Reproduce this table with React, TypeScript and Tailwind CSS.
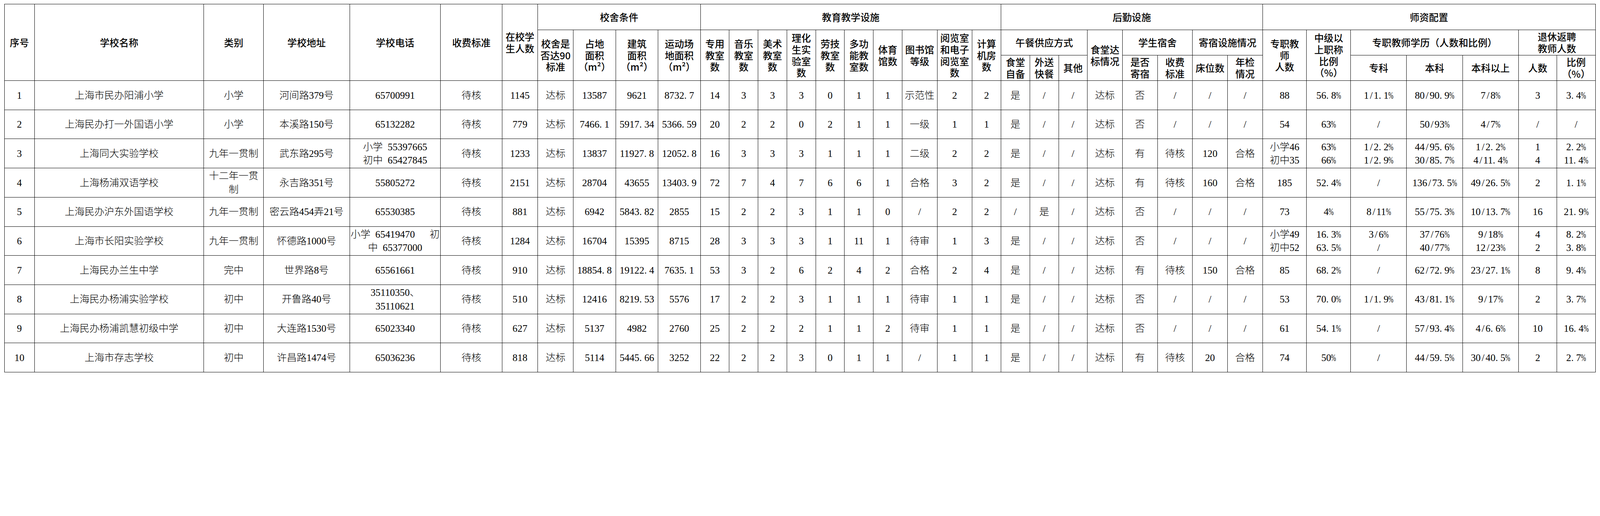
import React from "react";

// All sizes are expressed in vw so that 1 reference pixel = 100vw / 5664.
const colW = [
  "w-[1.8715vw]", "w-[10.5932vw]", "w-[3.7253vw]", "w-[5.3849vw]", "w-[5.6850vw]", "w-[3.8489vw]", "w-[2.2246vw]",
  "w-[2.2246vw]", "w-[2.6483vw]", "w-[2.6483vw]", "w-[2.6483vw]",
  "w-[1.8008vw]", "w-[1.8008vw]", "w-[1.8008vw]", "w-[1.8008vw]", "w-[1.8008vw]", "w-[1.8008vw]", "w-[1.8008vw]", "w-[2.1893vw]", "w-[2.1893vw]", "w-[1.8008vw]",
  "w-[1.8008vw]", "w-[1.8008vw]", "w-[1.8008vw]", "w-[2.1893vw]", "w-[2.1893vw]", "w-[2.1893vw]", "w-[2.1893vw]", "w-[2.1893vw]",
  "w-[2.7542vw]", "w-[2.7542vw]", "w-[3.4958vw]", "w-[3.4958vw]", "w-[3.4958vw]", "w-[2.4011vw]", "w-[2.4011vw]",
];

const rows: string[][] = [
  ["1", "上海市民办阳浦小学", "小学", "河间路379号", "65700991", "待核", "1145", "达标", "13587", "9621", "8732.7", "14", "3", "3", "3", "0", "1", "1", "示范性", "2", "2", "是", "/", "/", "达标", "否", "/", "/", "/", "88", "56.8%", "1/1.1%", "80/90.9%", "7/8%", "3", "3.4%"],
  ["2", "上海民办打一外国语小学", "小学", "本溪路150号", "65132282", "待核", "779", "达标", "7466.1", "5917.34", "5366.59", "20", "2", "2", "0", "2", "1", "1", "一级", "1", "1", "是", "/", "/", "达标", "否", "/", "/", "/", "54", "63%", "/", "50/93%", "4/7%", "/", "/"],
  ["3", "上海同大实验学校", "九年一贯制", "武东路295号", "小学 55397665\n初中 65427845", "待核", "1233", "达标", "13837", "11927.8", "12052.8", "16", "3", "3", "3", "1", "1", "1", "二级", "2", "2", "是", "/", "/", "达标", "有", "待核", "120", "合格", "小学46\n初中35", "63%\n66%", "1/2.2%\n1/2.9%", "44/95.6%\n30/85.7%", "1/2.2%\n4/11.4%", "1\n4", "2.2%\n11.4%"],
  ["4", "上海杨浦双语学校", "十二年一贯\n制", "永吉路351号", "55805272", "待核", "2151", "达标", "28704", "43655", "13403.9", "72", "7", "4", "7", "6", "6", "1", "合格", "3", "2", "是", "/", "/", "达标", "有", "待核", "160", "合格", "185", "52.4%", "/", "136/73.5%", "49/26.5%", "2", "1.1%"],
  ["5", "上海民办沪东外国语学校", "九年一贯制", "密云路454弄21号", "65530385", "待核", "881", "达标", "6942", "5843.82", "2855", "15", "2", "2", "3", "1", "1", "0", "/", "2", "2", "/", "是", "/", "达标", "否", "/", "/", "/", "73", "4%", "8/11%", "55/75.3%", "10/13.7%", "16", "21.9%"],
  ["6", "上海市长阳实验学校", "九年一贯制", "怀德路1000号", "小学 65419470   初\n中 65377000", "待核", "1284", "达标", "16704", "15395", "8715", "28", "3", "3", "3", "1", "11", "1", "待审", "1", "3", "是", "/", "/", "达标", "否", "/", "/", "/", "小学49\n初中52", "16.3%\n63.5%", "3/6%\n/", "37/76%\n40/77%", "9/18%\n12/23%", "4\n2", "8.2%\n3.8%"],
  ["7", "上海民办兰生中学", "完中", "世界路8号", "65561661", "待核", "910", "达标", "18854.8", "19122.4", "7635.1", "53", "3", "2", "6", "2", "4", "2", "合格", "2", "4", "是", "/", "/", "达标", "有", "待核", "150", "合格", "85", "68.2%", "/", "62/72.9%", "23/27.1%", "8", "9.4%"],
  ["8", "上海民办杨浦实验学校", "初中", "开鲁路40号", "35110350、\n35110621", "待核", "510", "达标", "12416", "8219.53", "5576", "17", "2", "2", "3", "1", "1", "1", "待审", "1", "1", "是", "/", "/", "达标", "否", "/", "/", "/", "53", "70.0%", "1/1.9%", "43/81.1%", "9/17%", "2", "3.7%"],
  ["9", "上海民办杨浦凯慧初级中学", "初中", "大连路1530号", "65023340", "待核", "627", "达标", "5137", "4982", "2760", "25", "2", "2", "2", "1", "1", "2", "待审", "1", "1", "是", "/", "/", "达标", "否", "/", "/", "/", "61", "54.1%", "/", "57/93.4%", "4/6.6%", "10", "16.4%"],
  ["10", "上海市存志学校", "初中", "许昌路1474号", "65036236", "待核", "818", "达标", "5114", "5445.66", "3252", "22", "2", "2", "3", "0", "1", "1", "/", "1", "1", "是", "/", "/", "达标", "有", "待核", "20", "合格", "74", "50%", "/", "44/59.5%", "30/40.5%", "2", "2.7%"],
];

function renderLine(line: string) {
  const out: React.ReactNode[] = [];
  let buf = "";
  const flush = () => {
    if (buf) {
      out.push(buf);
      buf = "";
    }
  };
  Array.from(line).forEach((ch, i) => {
    if (ch === ".") {
      flush();
      out.push(
        <span key={i} className="inline-block w-[0.5em] text-left">
          .
        </span>
      );
    } else if (ch === "/") {
      flush();
      out.push(
        <span key={i} className="inline-block w-[0.5em] text-center">
          /
        </span>
      );
    } else if (ch === "%") {
      flush();
      out.push(
        <span key={i} className="inline-flex w-[0.5em] justify-center">
          <span className="inline-block scale-x-[0.62]">%</span>
        </span>
      );
    } else if (ch === " ") {
      flush();
      out.push(
        <span key={i} className="inline-block w-[0.5em]">
          &nbsp;
        </span>
      );
    } else {
      buf += ch;
    }
  });
  flush();
  return out;
}

function Cell({ text }: { text: string }) {
  const lines = text.split("\n");
  return (
    <>
      {lines.map((l, i) => (
        <React.Fragment key={i}>
          {i > 0 && <br />}
          {renderLine(l)}
        </React.Fragment>
      ))}
    </>
  );
}

const thCls =
  "border-[0.036vw] border-black p-0 text-center align-middle font-medium whitespace-nowrap text-black font-['Noto_Sans_CJK_SC',sans-serif] text-[0.6003vw] leading-[0.7239vw]";
const tdCls =
  "border-[0.036vw] border-black p-0 text-center align-middle whitespace-nowrap text-black font-['Liberation_Serif','Noto_Sans_CJK_SC',serif] font-light text-[0.6179vw] leading-[0.8475vw]";

function H({ t, rs, cs }: { t: string; rs?: number; cs?: number }) {
  const lines = t.split("\n");
  return (
    <th rowSpan={rs} colSpan={cs} className={thCls}>
      {lines.map((l, i) => (
        <React.Fragment key={i}>
          {i > 0 && <br />}
          {l}
        </React.Fragment>
      ))}
    </th>
  );
}

export default function App() {
  return (
    <div className="w-screen h-[23.34vw] bg-white pt-[0.2472vw] pl-[0.2648vw] overflow-hidden">
      <table className="table-fixed border-collapse w-[99.435vw]">
        <colgroup>
          {colW.map((c, i) => (
            <col key={i} className={c} />
          ))}
        </colgroup>
        <thead>
          <tr className="h-[1.6066vw]">
            <H t="序号" rs={3} />
            <H t="学校名称" rs={3} />
            <H t="类别" rs={3} />
            <H t="学校地址" rs={3} />
            <H t="学校电话" rs={3} />
            <H t="收费标准" rs={3} />
            <H t={"在校学\n生人数"} rs={3} />
            <H t="校舍条件" cs={4} />
            <H t="教育教学设施" cs={10} />
            <H t="后勤设施" cs={8} />
            <H t="师资配置" cs={7} />
          </tr>
          <tr className="h-[1.5890vw]">
            <H t={"校舍是\n否达90\n标准"} rs={2} />
            <H t={"占地\n面积\n（m²）"} rs={2} />
            <H t={"建筑\n面积\n（m²）"} rs={2} />
            <H t={"运动场\n地面积\n（m²）"} rs={2} />
            <H t={"专用\n教室\n数"} rs={2} />
            <H t={"音乐\n教室\n数"} rs={2} />
            <H t={"美术\n教室\n数"} rs={2} />
            <H t={"理化\n生实\n验室\n数"} rs={2} />
            <H t={"劳技\n教室\n数"} rs={2} />
            <H t={"多功\n能教\n室数"} rs={2} />
            <H t={"体育\n馆数"} rs={2} />
            <H t={"图书馆\n等级"} rs={2} />
            <H t={"阅览室\n和电子\n阅览室\n数"} rs={2} />
            <H t={"计算\n机房\n数"} rs={2} />
            <H t="午餐供应方式" cs={3} />
            <H t={"食堂达\n标情况"} rs={2} />
            <H t="学生宿舍" cs={2} />
            <H t="寄宿设施情况" cs={2} />
            <H t={"专职教\n师\n人数"} rs={2} />
            <H t={"中级以\n上职称\n比例\n（%）"} rs={2} />
            <H t="专职教师学历（人数和比例）" cs={3} />
            <H t={"退休返聘\n教师人数"} cs={2} />
          </tr>
          <tr className="h-[1.5890vw]">
            <H t={"食堂\n自备"} />
            <H t={"外送\n快餐"} />
            <H t="其他" />
            <H t={"是否\n寄宿"} />
            <H t={"收费\n标准"} />
            <H t="床位数" />
            <H t={"年检\n情况"} />
            <H t="专科" />
            <H t="本科" />
            <H t="本科以上" />
            <H t="人数" />
            <H t={"比例\n（%）"} />
          </tr>
        </thead>
        <tbody>
          {rows.map((r, ri) => (
            <tr key={ri} className="h-[1.8238vw]">
              {r.map((c, ci) => (
                <td key={ci} className={tdCls}>
                  <Cell text={c} />
                </td>
              ))}
            </tr>
          ))}
        </tbody>
      </table>
    </div>
  );
}
